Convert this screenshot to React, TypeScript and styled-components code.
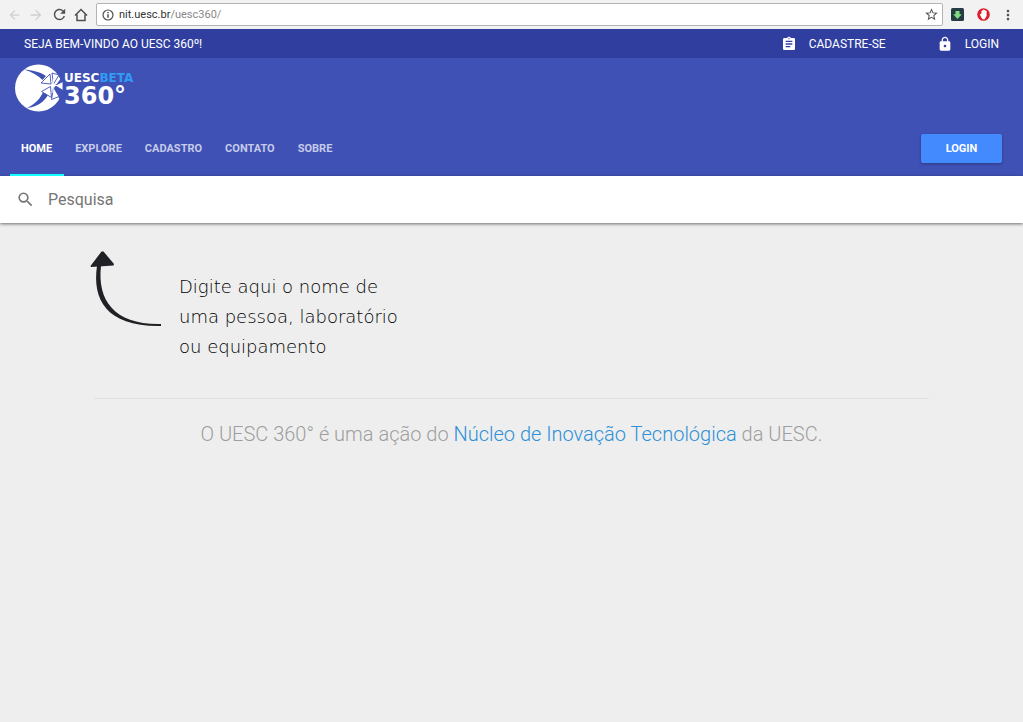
import React from 'react';
import styled, { createGlobalStyle } from 'styled-components';
import { MdArrowBack, MdArrowForward, MdAssignment, MdLock, MdMoreVert, MdRefresh, MdSearch, MdStarBorder } from 'react-icons/md';

const GlobalStyle = createGlobalStyle`
  * { box-sizing: border-box; }
  body { margin: 0; background: #eeeeee; font-family: Roboto, sans-serif; }
  button, input { font: inherit; }
  a { text-decoration: none; }
`;

const BrowserBar = styled.div`
  display: flex;
  align-items: center;
  height: 29px;
  padding: 0 4px 0 7px;
  background: #f2f2f2;
`;

const BrowserButton = styled.button<{ $dim?: boolean; $width?: number }>`
  display: flex;
  align-items: center;
  justify-content: center;
  flex: none;
  width: ${(p) => p.$width ?? 22}px;
  height: 22px;
  padding: 0;
  border: 0;
  background: none;
  color: ${(p) => (p.$dim ? '#d0d0d0' : '#505050')};
`;

const AddressBar = styled.div`
  display: flex;
  align-items: center;
  flex: 1;
  min-width: 0;
  height: 23px;
  margin: 0 2px 0 3px;
  padding: 0 3px 0 5px;
  gap: 5px;
  border: 1px solid #b4b4b8;
  border-radius: 2px;
  background: #fff;
  color: #505050;
  font: 11px/20px Roboto, sans-serif;
`;

const Address = styled.span`
  flex: 1;
  color: #888;
`;

const Host = styled.span`
  color: #333;
`;

const TopBar = styled.div`
  display: flex;
  align-items: center;
  justify-content: space-between;
  height: 29px;
  padding: 0 24px;
  background: #303f9f;
  color: #fff;
  font-size: 12px;
  font-weight: 400;
`;

const AccountLinks = styled.nav`
  display: flex;
  gap: 51px;
`;

const AccountLink = styled.a`
  display: flex;
  align-items: center;
  gap: 12px;
  color: #fff;
`;

const Header = styled.header`
  background: #3f51b5;
`;

const Logo = styled.a`
  display: flex;
  align-items: flex-start;
  height: 62px;
  padding: 6px 0 0 14px;
  color: #fff;
  font-family: "DejaVu Sans", sans-serif;
  font-weight: 700;
`;

const LogoWords = styled.span`
  display: flex;
  flex-direction: column;
  padding-top: 8px;
`;

const LogoName = styled.span`
  font-size: 12px;
  line-height: 12px;
`;

const LogoBeta = styled.span`
  color: #2f9df4;
`;

const LogoNumber = styled.span`
  font-size: 24px;
  line-height: 24px;
`;

const NavBar = styled.div`
  display: flex;
  align-items: center;
  justify-content: space-between;
  height: 56px;
  padding: 0 21px 0 10px;
`;

const Tabs = styled.nav`
  display: flex;
  height: 56px;
`;

const Tab = styled.a<{ $active?: boolean }>`
  padding: 2px 12px 0 11px;
  border-bottom: 2px solid ${(p) => (p.$active ? '#18ffff' : 'transparent')};
  color: ${(p) => (p.$active ? '#fff' : '#c5cbe9')};
  font-size: 11px;
  font-weight: 700;
  line-height: 54px;
`;

const LoginButton = styled.button`
  width: 81px;
  height: 29px;
  padding: 0;
  border: 0;
  border-radius: 2px;
  background: #448aff;
  box-shadow: 0 1px 3px rgba(0, 0, 0, 0.3);
  color: #fff;
  font-size: 11px;
  font-weight: 700;
`;

const SearchBar = styled.label`
  display: flex;
  align-items: center;
  height: 47px;
  padding: 0 16px;
  gap: 13px;
  background: #fff;
  box-shadow: 0 1px 3px rgba(0, 0, 0, 0.55);
  color: #757575;
`;

const SearchInput = styled.input`
  flex: 1;
  min-width: 0;
  padding: 0;
  border: 0;
  outline: 0;
  background: none;
  font-size: 16px;
  &::placeholder { color: #757575; opacity: 1; }
`;

const Main = styled.main`
  padding: 28px 94px;
`;

const Hint = styled.section`
  display: flex;
  height: 147px;
  margin-left: -5px;
  gap: 17px;
`;

const HintText = styled.p`
  margin: 21px 0 0;
  color: #000;
  font-family: "DejaVu Sans", sans-serif;
  font-size: 18px;
  font-weight: 200;
  line-height: 30px;
`;

const Divider = styled.hr`
  margin: 0;
  border: 0;
  border-top: 1px solid #e0e0e0;
`;

const Credit = styled.p`
  margin: 20px 0 0;
  color: #9e9e9e;
  font-size: 20px;
  font-weight: 300;
  line-height: 30px;
  text-align: center;
`;

const CreditLink = styled.a`
  color: #2d90d8;
`;

const tabs = ['HOME', 'EXPLORE', 'CADASTRO', 'CONTATO', 'SOBRE'];

const HomeIcon = () => (
  <svg width="14" height="14" viewBox="0 0 14 14" fill="none" stroke="currentColor" strokeWidth="1.5">
    <path d="M1 7.5 7 1.5l6 6M3 6.5v6h8v-6" />
  </svg>
);

const InfoIcon = () => (
  <svg width="12" height="12" viewBox="0 0 12 12" fill="none" stroke="currentColor" strokeWidth="1.2">
    <circle cx="6" cy="6" r="5" />
    <path d="M6 5.2v3.6M6 3v1.3" strokeWidth="1.5" />
  </svg>
);

const DownloadIcon = () => (
  <svg width="13" height="13" viewBox="0 0 13 13">
    <rect width="13" height="13" rx="1.5" fill="#263c43" />
    <path d="M4.5 3h4v3.2h2.3L6.5 11 2.2 6.2h2.3z" fill="#80dc82" />
  </svg>
);

const BlockIcon = () => (
  <svg width="13" height="13" viewBox="0 0 13 13">
    <circle cx="6.5" cy="6.5" r="6.3" fill="#dc1f2d" />
    <path d="M2.8 6.5 4.4 5.6V3.2L6.6 1.6 9.6 3v5L7.6 11.2H5.4z" fill="#fff" />
  </svg>
);

const Globe = () => (
  <svg width="50" height="48" viewBox="0 0 50 48">
    <circle cx="24.5" cy="24" r="23.5" fill="#fff" />
    <g fill="#3f51b5">
      <path d="M10 5.5c8 .5 16 2.500 22 6.500l-3.500 4C24 11.500 18 8 10 5.500z" />
      <path d="M13 44c8-4 14-10 16.500-17l4.500 4c-4 7-11 12-21 13z" />
      <path d="M47 14 50 18v14l-4 4-6-12z" />
    </g>
    <g fill="#fff" stroke="#3f51b5" strokeWidth=".9" strokeLinejoin="round">
      <path d="m37 20-10-1 9-9z" />
      <path d="m36.500 22.500-9 5 10 6z" />
      <path d="m39.500 20-1.500-11 7 2z" />
      <path d="m39.500 23.500-2 12 7.500-3z" />
      <path d="m41 21.500 8-4v9z" />
    </g>
    <path d="M31 21.500h14M39.500 15l-.5 14" stroke="#fff" strokeWidth="1" />
  </svg>
);

const CurvedArrow = () => (
  <svg width="73" height="76" viewBox="0 0 73 76" fill="#202124">
    <path d="M12.500.500h2L25 13l-.5 1.500L2 16l-.5-1z" />
    <path d="M8 15C3 49 18 76 72 75v-2C26 74 8 50 12 15z" />
  </svg>
);

export default function App() {
  return (
    <>
      <GlobalStyle />
      <BrowserBar>
        <BrowserButton $dim $width={15} aria-label="Voltar"><MdArrowBack size={16} /></BrowserButton>
        <BrowserButton $dim $width={28} aria-label="Avançar"><MdArrowForward size={16} /></BrowserButton>
        <BrowserButton $width={18} aria-label="Recarregar"><MdRefresh size={17} /></BrowserButton>
        <BrowserButton $width={25} aria-label="Página inicial"><HomeIcon /></BrowserButton>
        <AddressBar>
          <InfoIcon />
          <Address><Host>nit.uesc.br</Host>/uesc360/</Address>
          <MdStarBorder size={15} />
        </AddressBar>
        <BrowserButton $width={24} aria-label="Downloads"><DownloadIcon /></BrowserButton>
        <BrowserButton $width={28} aria-label="Bloqueador"><BlockIcon /></BrowserButton>
        <BrowserButton $width={22} aria-label="Menu"><MdMoreVert size={16} /></BrowserButton>
      </BrowserBar>
      <TopBar>
        <span>SEJA BEM-VINDO AO UESC 360º!</span>
        <AccountLinks>
          <AccountLink href="#cadastro"><MdAssignment size={16} />CADASTRE-SE</AccountLink>
          <AccountLink href="#login"><MdLock size={16} />LOGIN</AccountLink>
        </AccountLinks>
      </TopBar>
      <Header>
        <Logo href="#home">
          <Globe />
          <LogoWords>
            <LogoName>UESC<LogoBeta>BETA</LogoBeta></LogoName>
            <LogoNumber>360°</LogoNumber>
          </LogoWords>
        </Logo>
        <NavBar>
          <Tabs>
            {tabs.map((name, i) => (
              <Tab key={name} href={`#${name.toLowerCase()}`} $active={i === 0}>{name}</Tab>
            ))}
          </Tabs>
          <LoginButton>LOGIN</LoginButton>
        </NavBar>
      </Header>
      <SearchBar>
        <MdSearch size={19} />
        <SearchInput placeholder="Pesquisa" aria-label="Pesquisa" />
      </SearchBar>
      <Main>
        <Hint>
          <CurvedArrow />
          <HintText>
            Digite aqui o nome de<br />uma pessoa, laboratório<br />ou equipamento
          </HintText>
        </Hint>
        <Divider />
        <Credit>
          O UESC 360° é uma ação do <CreditLink href="#nit">Núcleo de Inovação Tecnológica</CreditLink> da UESC.
        </Credit>
      </Main>
    </>
  );
}
